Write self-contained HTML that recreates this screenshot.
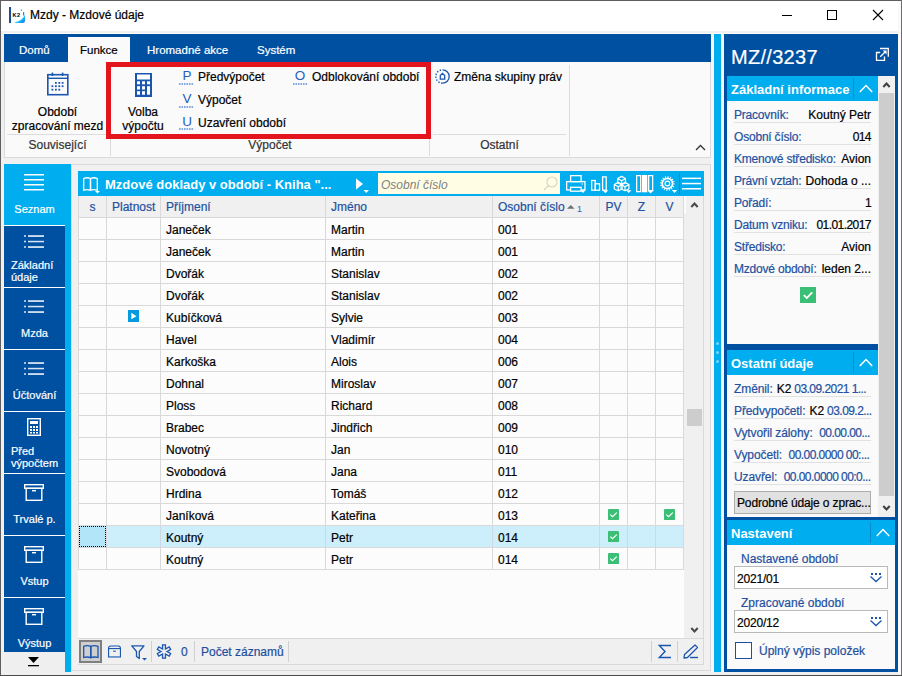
<!DOCTYPE html>
<html><head><meta charset="utf-8">
<style>
*{margin:0;padding:0;box-sizing:border-box}
html,body{width:902px;height:676px;overflow:hidden;background:#f0f0f0;font-family:"Liberation Sans",sans-serif;font-size:12px;color:#000}
.a{position:absolute}
.t{position:absolute;white-space:nowrap;line-height:14px;-webkit-text-stroke:0.2px}
.d{letter-spacing:-0.55px}
svg{position:absolute;overflow:visible}
</style></head><body>
<div class="a" style="left:0px;top:0px;width:902px;height:676px;background:#f0f0f0;"></div>
<div class="a" style="left:1px;top:1px;width:899px;height:30px;background:#fff;"></div>
<div class="a" style="left:0px;top:0px;width:902px;height:1px;background:#5e5e5e;"></div>
<div class="a" style="left:0px;top:0px;width:1px;height:676px;background:#5e5e5e;"></div>
<div class="a" style="left:898px;top:1px;width:3px;height:673px;background:#fafafa;"></div>
<div class="a" style="left:901px;top:0px;width:1px;height:676px;background:#6e6e6e;"></div>
<div class="a" style="left:4px;top:33px;width:896px;height:1px;background:#fff;"></div>
<div class="a" style="left:9px;top:7px;width:2px;height:16px;background:#1a4d9c;"></div>
<svg style="left:12px;top:8px" width="14" height="16"><defs><linearGradient id="k2g" x1="0" y1="0" x2="1" y2="1"><stop offset="0" stop-color="#3ff0d8"/><stop offset="0.6" stop-color="#19c8f5"/><stop offset="1" stop-color="#1a60f0"/></linearGradient></defs><path d="M2.5 14.3Q9.5 13.5 13 6.8V13Q13 15 10.5 15H4Z" fill="url(#k2g)"/><circle cx="9.5" cy="2.2" r="0.8" fill="#5a8ef0"/><rect x="11" y="4" width="1.2" height="3.5" fill="#3a7af0"/><text x="0.6" y="9" font-family="Liberation Sans" font-weight="bold" font-size="5.6" letter-spacing="0.4" fill="#000" style="-webkit-text-stroke:0.3px #000">K2</text></svg>
<div class="t" style="left:30px;top:8px;">Mzdy - Mzdové údaje</div>
<div class="a" style="left:782px;top:15px;width:10px;height:1px;background:#000;"></div>
<div class="a" style="left:827px;top:10px;width:10px;height:10px;background:transparent;border:1px solid #000"></div>
<svg style="left:873px;top:10px" width="10" height="10"><path d="M0 0L10 10M10 0L0 10" stroke="#000" stroke-width="1.1"/></svg>
<div class="a" style="left:4px;top:34px;width:707px;height:28px;background:#0050a2;"></div>
<div class="a" style="left:68px;top:37px;width:62px;height:25px;background:#fafafa;"></div>
<div class="t" style="left:19px;top:43px;color:#fff;font-size:11.5px">Domů</div>
<div class="t" style="left:80px;top:43px;font-size:11.5px">Funkce</div>
<div class="t" style="left:147px;top:43px;color:#fff;font-size:11.5px">Hromadné akce</div>
<div class="t" style="left:257px;top:43px;color:#fff;font-size:11.5px">Systém</div>
<div class="a" style="left:4px;top:62px;width:707px;height:96px;background:#fafafa;border:1px solid #dadada;border-top:none"></div>
<svg style="left:47px;top:72px" width="22" height="24"><g fill="none" stroke="#1a56b0" stroke-width="1.6"><rect x="0.8" y="2.7" width="20" height="20"/></g><rect x="0.7" y="5.6" width="20.2" height="1.4" fill="#1a56b0"/><rect x="4.6" y="0.6" width="1.6" height="3.4" fill="#1a56b0"/><rect x="14.8" y="0.6" width="1.6" height="3.4" fill="#1a56b0"/><g fill="#1a56b0"><rect x="8" y="10" width="1.8" height="1.8"/><rect x="11.4" y="10" width="1.8" height="1.8"/><rect x="14.7" y="10" width="1.8" height="1.8"/><rect x="4.5" y="13.3" width="1.8" height="1.8"/><rect x="8" y="13.3" width="1.8" height="1.8"/><rect x="11.4" y="13.3" width="1.8" height="1.8"/><rect x="14.7" y="13.3" width="1.8" height="1.8"/><rect x="4.5" y="16.8" width="1.8" height="1.8"/><rect x="8" y="16.8" width="1.8" height="1.8"/><rect x="11.4" y="16.8" width="1.8" height="1.8"/></g></svg>
<div class="t" style="left:4px;top:105px;width:107px;text-align:center">Období</div>
<div class="t" style="left:4px;top:119px;width:107px;text-align:center">zpracování mezd</div>
<div class="a" style="left:7px;top:134px;width:421px;height:1px;background:#dcdcdc;"></div>
<div class="a" style="left:433px;top:134px;width:133px;height:1px;background:#dcdcdc;"></div>
<div class="a" style="left:110px;top:139px;width:1px;height:17px;background:#dcdcdc;"></div>
<div class="a" style="left:429px;top:139px;width:1px;height:17px;background:#dcdcdc;"></div>
<div class="a" style="left:569px;top:65px;width:1px;height:91px;background:#dcdcdc;"></div>
<div class="t" style="left:4px;top:138px;width:107px;text-align:center;color:#333">Související</div>
<div class="t" style="left:111px;top:138px;width:318px;text-align:center;color:#333">Výpočet</div>
<div class="t" style="left:430px;top:138px;width:139px;text-align:center;color:#333">Ostatní</div>
<svg style="left:695px;top:144px" width="11" height="7"><path d="M1 6L5.5 1.5L10 6" fill="none" stroke="#333" stroke-width="1.3"/></svg>
<svg style="left:135px;top:73px" width="17" height="24"><rect width="17" height="24" fill="#1a56b0"/><g fill="#fff"><rect x="2" y="1.5" width="13" height="5"/><rect x="2" y="8.3" width="3" height="3"/><rect x="7" y="8.3" width="3" height="3"/><rect x="12" y="8.3" width="3" height="3"/><rect x="2" y="13.2" width="3" height="3.3"/><rect x="7" y="13.2" width="3" height="3.3"/><rect x="12" y="13.2" width="3" height="8.5"/><rect x="2" y="18.2" width="3" height="3.5"/><rect x="7" y="18.2" width="3" height="3.5"/></g></svg>
<div class="t" style="left:112px;top:105px;width:62px;text-align:center">Volba</div>
<div class="t" style="left:112px;top:119px;width:62px;text-align:center">výpočtu</div>
<div class="t" style="left:180px;top:69px;width:14px;text-align:center;font-size:13.5px;color:#1f5fc0;-webkit-text-stroke:0">P</div>
<svg style="left:179px;top:83px" width="15" height="2"><line x1="0" y1="1" x2="15" y2="1" stroke="#5d8fd6" stroke-width="1.6" stroke-dasharray="1.6 0.9"/></svg>
<div class="t" style="left:198px;top:70px;">Předvýpočet</div>
<div class="t" style="left:180px;top:92px;width:14px;text-align:center;font-size:13.5px;color:#1f5fc0;-webkit-text-stroke:0">V</div>
<svg style="left:179px;top:106px" width="15" height="2"><line x1="0" y1="1" x2="15" y2="1" stroke="#5d8fd6" stroke-width="1.6" stroke-dasharray="1.6 0.9"/></svg>
<div class="t" style="left:198px;top:93px;">Výpočet</div>
<div class="t" style="left:180px;top:115px;width:14px;text-align:center;font-size:13.5px;color:#1f5fc0;-webkit-text-stroke:0">U</div>
<svg style="left:179px;top:128px" width="15" height="2"><line x1="0" y1="1" x2="15" y2="1" stroke="#5d8fd6" stroke-width="1.6" stroke-dasharray="1.6 0.9"/></svg>
<div class="t" style="left:198px;top:116px;">Uzavření období</div>
<div class="t" style="left:293px;top:69px;width:14px;text-align:center;font-size:13.5px;color:#1f5fc0;-webkit-text-stroke:0">O</div>
<svg style="left:293px;top:83px" width="15" height="2"><line x1="0" y1="1" x2="15" y2="1" stroke="#5d8fd6" stroke-width="1.6" stroke-dasharray="1.6 0.9"/></svg>
<div class="t" style="left:312px;top:70px;">Odblokování období</div>
<svg style="left:435px;top:69px" width="15" height="15"><path d="M7.5 0.8A6.7 6.7 0 0 1 7.5 14.2" fill="none" stroke="#1a56b0" stroke-width="1.3"/><path d="M7.5 14.2A6.7 6.7 0 0 1 7.5 0.8" fill="none" stroke="#1a56b0" stroke-width="1.4" stroke-dasharray="1.4 1.6"/><path d="M5.3 10.2V6.6L7.5 4.4L9.7 6.6V10.2Z" fill="none" stroke="#1a56b0" stroke-width="1.3"/></svg>
<div class="t" style="left:454px;top:70px;">Změna skupiny práv</div>
<div class="a" style="left:106px;top:62px;width:325px;height:77px;background:transparent;border:5px solid #e3141e"></div>
<div class="a" style="left:4px;top:164px;width:67px;height:508px;background:#00adef;"></div>
<svg style="left:24px;top:173px" width="20" height="18"><g fill="#fff"><rect x="0" y="1" width="20" height="1.5"/><rect x="0" y="6" width="20" height="1.5"/><rect x="0" y="11" width="20" height="1.5"/><rect x="0" y="16" width="20" height="1.5"/></g></svg>
<div class="t" style="left:4px;top:202px;width:61px;text-align:center;font-size:11px;color:#fff">Seznam</div>
<div class="a" style="left:4px;top:225px;width:61px;height:1px;background:#fff;"></div>
<div class="a" style="left:4px;top:226px;width:61px;height:61px;background:#0050a2;"></div>
<div class="a" style="left:4px;top:287px;width:61px;height:1px;background:#fff;"></div>
<div class="a" style="left:4px;top:288px;width:61px;height:61px;background:#0050a2;"></div>
<div class="a" style="left:4px;top:349px;width:61px;height:1px;background:#fff;"></div>
<div class="a" style="left:4px;top:350px;width:61px;height:61px;background:#0050a2;"></div>
<div class="a" style="left:4px;top:411px;width:61px;height:1px;background:#fff;"></div>
<div class="a" style="left:4px;top:412px;width:61px;height:61px;background:#0050a2;"></div>
<div class="a" style="left:4px;top:473px;width:61px;height:1px;background:#fff;"></div>
<div class="a" style="left:4px;top:474px;width:61px;height:61px;background:#0050a2;"></div>
<div class="a" style="left:4px;top:535px;width:61px;height:1px;background:#fff;"></div>
<div class="a" style="left:4px;top:536px;width:61px;height:61px;background:#0050a2;"></div>
<div class="a" style="left:4px;top:597px;width:61px;height:1px;background:#fff;"></div>
<div class="a" style="left:4px;top:598px;width:61px;height:54px;background:#0050a2;"></div>
<svg style="left:23px;top:235px" width="22" height="14"><g fill="#fff"><rect x="1.2" y="0.2" width="1.6" height="1.6"/><rect x="1.2" y="5.7" width="1.6" height="1.6"/><rect x="1.2" y="11.2" width="1.6" height="1.6"/><rect x="5" y="0.3" width="16" height="1.5"/><rect x="5" y="5.8" width="16" height="1.5" opacity=".85"/><rect x="5" y="11.3" width="16" height="1.5"/></g></svg>
<div class="t" style="left:11px;top:259px;font-size:11px;color:#fff;line-height:12px">Základní<br>údaje</div>
<svg style="left:23px;top:300px" width="22" height="14"><g fill="#fff"><rect x="1.2" y="0.2" width="1.6" height="1.6"/><rect x="1.2" y="5.7" width="1.6" height="1.6"/><rect x="1.2" y="11.2" width="1.6" height="1.6"/><rect x="5" y="0.3" width="16" height="1.5"/><rect x="5" y="5.8" width="16" height="1.5" opacity=".85"/><rect x="5" y="11.3" width="16" height="1.5"/></g></svg>
<div class="t" style="left:4px;top:326px;width:61px;text-align:center;font-size:11px;color:#fff">Mzda</div>
<svg style="left:23px;top:362px" width="22" height="14"><g fill="#fff"><rect x="1.2" y="0.2" width="1.6" height="1.6"/><rect x="1.2" y="5.7" width="1.6" height="1.6"/><rect x="1.2" y="11.2" width="1.6" height="1.6"/><rect x="5" y="0.3" width="16" height="1.5"/><rect x="5" y="5.8" width="16" height="1.5" opacity=".85"/><rect x="5" y="11.3" width="16" height="1.5"/></g></svg>
<div class="t" style="left:4px;top:388px;width:61px;text-align:center;font-size:11px;color:#fff">Účtování</div>
<svg style="left:27px;top:418px" width="14" height="18"><rect x="0.7" y="0.7" width="12.6" height="16.6" fill="none" stroke="#fff" stroke-width="1.4"/><rect x="3" y="3" width="8" height="3" fill="#fff"/><g fill="#fff"><rect x="3" y="8" width="2" height="2"/><rect x="6" y="8" width="2" height="2"/><rect x="9" y="8" width="2" height="2"/><rect x="3" y="11" width="2" height="2"/><rect x="6" y="11" width="2" height="2"/><rect x="9" y="11" width="2" height="2"/><rect x="3" y="14" width="2" height="1.5"/><rect x="6" y="14" width="2" height="1.5"/><rect x="9" y="14" width="2" height="1.5"/></g></svg>
<div class="t" style="left:11px;top:445px;font-size:11px;color:#fff;line-height:12px">Před<br>výpočtem</div>
<svg style="left:24px;top:484px" width="20" height="17"><g fill="none" stroke="#fff" stroke-width="1.4"><rect x="0.7" y="0.7" width="18.6" height="3.6"/><rect x="2.2" y="4.3" width="15.6" height="12"/></g><rect x="8" y="6" width="4" height="1.4" fill="#fff"/></svg>
<div class="t" style="left:4px;top:512px;width:61px;text-align:center;font-size:11px;color:#fff">Trvalé p.</div>
<svg style="left:24px;top:546px" width="20" height="17"><g fill="none" stroke="#fff" stroke-width="1.4"><rect x="0.7" y="0.7" width="18.6" height="3.6"/><rect x="2.2" y="4.3" width="15.6" height="12"/></g><rect x="8" y="6" width="4" height="1.4" fill="#fff"/></svg>
<div class="t" style="left:4px;top:574px;width:61px;text-align:center;font-size:11px;color:#fff">Vstup</div>
<svg style="left:24px;top:608px" width="20" height="17"><g fill="none" stroke="#fff" stroke-width="1.4"><rect x="0.7" y="0.7" width="18.6" height="3.6"/><rect x="2.2" y="4.3" width="15.6" height="12"/></g><rect x="8" y="6" width="4" height="1.4" fill="#fff"/></svg>
<div class="t" style="left:4px;top:636px;width:61px;text-align:center;font-size:11px;color:#fff">Výstup</div>
<div class="a" style="left:4px;top:652px;width:61px;height:20px;background:#efefef;"></div>
<svg style="left:28px;top:657px" width="12" height="10"><path d="M0 0H11L5.5 6Z" fill="#000"/><rect x="0" y="8" width="11" height="1.3" fill="#000"/></svg>
<div class="a" style="left:71px;top:164px;width:640px;height:507px;background:#f0f0f0;border:1px solid #d9d9d9"></div>
<div class="a" style="left:78px;top:171px;width:626px;height:25px;background:#00adef;"></div>
<svg style="left:83px;top:177px" width="18" height="17" viewBox="0 0 18 17"><g fill="none" stroke="#fff" stroke-width="1.3"><path d="M0.7 1.5Q4 0 7.5 1.5V13.2Q4 12 0.7 13.2Z"/><path d="M7.5 1.5Q11 0 14.3 1.5V13.2Q11 12 7.5 13.2Z"/></g><path d="M12 14H17L14.5 16.5Z" fill="#fff"/></svg>
<div class="t" style="left:105px;top:178px;font-size:13px;font-weight:bold;color:#fff;-webkit-text-stroke:0">Mzdové doklady v období - Kniha "...</div>
<svg style="left:355px;top:178px" width="15" height="16"><path d="M1 0.5L8 6L1 11.5Z" fill="#fff"/><path d="M8.5 12H14L11.25 15Z" fill="#fff"/></svg>
<div class="a" style="left:378px;top:173px;width:182px;height:21px;background:#fffde3;"></div>
<div class="t" style="left:381px;top:178px;font-style:italic;color:#808080;-webkit-text-stroke:0">Osobní číslo</div>
<svg style="left:543px;top:176px" width="15" height="15"><circle cx="9" cy="6" r="5" fill="none" stroke="#d6d6c4" stroke-width="1.2"/><path d="M5.5 9.5L1 14" stroke="#d6d6c4" stroke-width="1.3"/></svg>
<svg style="left:566px;top:175px" width="21" height="19" viewBox="0 0 21 19"><g fill="none" stroke="#fff" stroke-width="1.3"><rect x="4.6" y="0.65" width="10.5" height="6"/><rect x="0.65" y="6.6" width="18.3" height="8.3"/></g><rect x="4.6" y="12.3" width="10.5" height="3.9" fill="#00adef" stroke="#fff" stroke-width="1.3"/><rect x="15.5" y="8.5" width="1.5" height="1" fill="#fff"/><path d="M14.5 15.2H19.5L17 18Z" fill="#fff"/></svg>
<svg style="left:591px;top:176px" width="18" height="18" viewBox="0 0 18 18"><g fill="none" stroke="#fff" stroke-width="1.3"><rect x="0.65" y="4.5" width="3.6" height="9.7"/><rect x="4.25" y="7.8" width="4.3" height="6.4"/><rect x="11.6" y="0.9" width="3.6" height="13.3"/></g><path d="M11.5 14.3H17.3L14.4 17.3Z" fill="#fff"/></svg>
<svg style="left:614px;top:176px" width="18" height="18" viewBox="0 0 18 18"><g fill="none" stroke="#fff" stroke-width="1.2" stroke-linejoin="round"><path d="M7.60 0.40L11.50 2.50L11.50 7.00L7.60 8.80L3.70 7.00L3.70 2.50Z M3.70 2.50L7.60 4.70L11.50 2.50 M7.60 4.70L7.60 8.80"/><path d="M4.20 6.40L8.10 8.50L8.10 13.00L4.20 14.80L0.30 13.00L0.30 8.50Z M0.30 8.50L4.20 10.70L8.10 8.50 M4.20 10.70L4.20 14.80"/><path d="M11.00 6.40L14.90 8.50L14.90 13.00L11.00 14.80L7.10 13.00L7.10 8.50Z M7.10 8.50L11.00 10.70L14.90 8.50 M11.00 10.70L11.00 14.80"/></g><path d="M12 14.3H17.5L14.75 17Z" fill="#fff"/></svg>
<svg style="left:636px;top:175px" width="18" height="19" viewBox="0 0 18 19"><g fill="none" stroke="#fff" stroke-width="1.3"><rect x="0.65" y="0.65" width="4" height="16"/><rect x="12.65" y="0.65" width="4" height="15"/></g><rect x="6" y="0" width="5.3" height="17.3" fill="#fff"/><path d="M11.5 15.5H17.5L14.5 18.5Z" fill="#fff"/></svg>
<svg style="left:659px;top:175px" width="20" height="19" viewBox="0 0 20 19"><circle cx="8.4" cy="8.5" r="5.2" fill="none" stroke="#fff" stroke-width="1.7"/><circle cx="8.4" cy="8.5" r="6.6" fill="none" stroke="#fff" stroke-width="1.6" stroke-dasharray="1.0 1.59"/><circle cx="8.4" cy="8.5" r="2.3" fill="none" stroke="#fff" stroke-width="1.2"/><path d="M12.8 15H18.2L15.5 18Z" fill="#fff"/></svg>
<div class="a" style="left:679px;top:173px;width:1px;height:21px;background:#0a8dcb;"></div>
<svg style="left:682px;top:177px" width="20" height="13"><g fill="#fff"><rect x="0" y="0.6" width="19" height="1.5"/><rect x="0" y="5.8" width="19" height="1.5"/><rect x="0" y="11" width="19" height="1.5"/></g></svg>
<div class="a" style="left:78px;top:196px;width:626px;height:442px;background:#fcfcfc;"></div>
<div class="a" style="left:78px;top:196px;width:606px;height:21px;background:#f0f0f0;"></div>
<div class="a" style="left:684px;top:214px;width:19px;height:424px;background:#f0f0f0;"></div>
<div class="a" style="left:686px;top:196px;width:17px;height:18px;background:#f0f0f0;"></div>
<div class="a" style="left:703px;top:196px;width:1px;height:469px;background:#d9d9d9;"></div>
<div class="a" style="left:78px;top:196px;width:1px;height:374px;background:#d9d9d9;"></div>
<div class="a" style="left:106px;top:196px;width:1px;height:374px;background:#d9d9d9;"></div>
<div class="a" style="left:160px;top:196px;width:1px;height:374px;background:#d9d9d9;"></div>
<div class="a" style="left:325px;top:196px;width:1px;height:374px;background:#d9d9d9;"></div>
<div class="a" style="left:492px;top:196px;width:1px;height:374px;background:#d9d9d9;"></div>
<div class="a" style="left:599px;top:196px;width:1px;height:374px;background:#d9d9d9;"></div>
<div class="a" style="left:627px;top:196px;width:1px;height:374px;background:#d9d9d9;"></div>
<div class="a" style="left:655px;top:196px;width:1px;height:374px;background:#d9d9d9;"></div>
<div class="a" style="left:683px;top:196px;width:1px;height:374px;background:#d9d9d9;"></div>
<div class="a" style="left:78px;top:217px;width:606px;height:1px;background:#d9d9d9;"></div>
<div class="a" style="left:78px;top:239px;width:606px;height:1px;background:#d9d9d9;"></div>
<div class="a" style="left:78px;top:261px;width:606px;height:1px;background:#d9d9d9;"></div>
<div class="a" style="left:78px;top:283px;width:606px;height:1px;background:#d9d9d9;"></div>
<div class="a" style="left:78px;top:305px;width:606px;height:1px;background:#d9d9d9;"></div>
<div class="a" style="left:78px;top:327px;width:606px;height:1px;background:#d9d9d9;"></div>
<div class="a" style="left:78px;top:349px;width:606px;height:1px;background:#d9d9d9;"></div>
<div class="a" style="left:78px;top:371px;width:606px;height:1px;background:#d9d9d9;"></div>
<div class="a" style="left:78px;top:393px;width:606px;height:1px;background:#d9d9d9;"></div>
<div class="a" style="left:78px;top:415px;width:606px;height:1px;background:#d9d9d9;"></div>
<div class="a" style="left:78px;top:437px;width:606px;height:1px;background:#d9d9d9;"></div>
<div class="a" style="left:78px;top:459px;width:606px;height:1px;background:#d9d9d9;"></div>
<div class="a" style="left:78px;top:481px;width:606px;height:1px;background:#d9d9d9;"></div>
<div class="a" style="left:78px;top:503px;width:606px;height:1px;background:#d9d9d9;"></div>
<div class="a" style="left:78px;top:525px;width:606px;height:1px;background:#d9d9d9;"></div>
<div class="a" style="left:78px;top:547px;width:606px;height:1px;background:#d9d9d9;"></div>
<div class="a" style="left:78px;top:569px;width:606px;height:1px;background:#d9d9d9;"></div>
<div class="t" style="left:79px;top:200px;width:27px;text-align:center;color:#22509f">s</div>
<div class="t" style="left:112px;top:200px;color:#22509f">Platnost</div>
<div class="t" style="left:166px;top:200px;color:#22509f">Příjmení</div>
<div class="t" style="left:331px;top:200px;color:#22509f">Jméno</div>
<div class="t" style="left:498px;top:200px;color:#22509f">Osobní číslo</div>
<svg style="left:567px;top:204px" width="8" height="6"><path d="M0 4.8H7.6L3.8 1Z" fill="#707070"/></svg>
<div class="t" style="left:577px;top:202px;font-size:9px;color:#3060c0;-webkit-text-stroke:0">1</div>
<div class="t" style="left:600px;top:200px;width:27px;text-align:center;color:#22509f">PV</div>
<div class="t" style="left:628px;top:200px;width:27px;text-align:center;color:#22509f">Z</div>
<div class="t" style="left:656px;top:200px;width:27px;text-align:center;color:#22509f">V</div>
<div class="a" style="left:107px;top:526px;width:576px;height:21px;background:#cdeefb;"></div>
<div class="a" style="left:79px;top:526px;width:27px;height:21px;background:#b3e5f9;border:1px dotted #000"></div>
<div class="a" style="left:160px;top:526px;width:1px;height:21px;background:#cdd9de;"></div>
<div class="a" style="left:325px;top:526px;width:1px;height:21px;background:#cdd9de;"></div>
<div class="a" style="left:492px;top:526px;width:1px;height:21px;background:#cdd9de;"></div>
<div class="a" style="left:599px;top:526px;width:1px;height:21px;background:#cdd9de;"></div>
<div class="a" style="left:627px;top:526px;width:1px;height:21px;background:#cdd9de;"></div>
<div class="a" style="left:655px;top:526px;width:1px;height:21px;background:#cdd9de;"></div>
<div class="t" style="left:166px;top:223px;">Janeček</div>
<div class="t" style="left:331px;top:223px;">Martin</div>
<div class="t" style="left:498px;top:223px;">001</div>
<div class="t" style="left:166px;top:245px;">Janeček</div>
<div class="t" style="left:331px;top:245px;">Martin</div>
<div class="t" style="left:498px;top:245px;">001</div>
<div class="t" style="left:166px;top:267px;">Dvořák</div>
<div class="t" style="left:331px;top:267px;">Stanislav</div>
<div class="t" style="left:498px;top:267px;">002</div>
<div class="t" style="left:166px;top:289px;">Dvořák</div>
<div class="t" style="left:331px;top:289px;">Stanislav</div>
<div class="t" style="left:498px;top:289px;">002</div>
<div class="t" style="left:166px;top:311px;">Kubíčková</div>
<div class="t" style="left:331px;top:311px;">Sylvie</div>
<div class="t" style="left:498px;top:311px;">003</div>
<svg style="left:128px;top:310px" width="11" height="12"><rect width="11" height="12" fill="#069be0"/><path d="M3.3 2.8L8.5 6.2L3.3 9.3Z" fill="#fff"/></svg>
<div class="t" style="left:166px;top:333px;">Havel</div>
<div class="t" style="left:331px;top:333px;">Vladimír</div>
<div class="t" style="left:498px;top:333px;">004</div>
<div class="t" style="left:166px;top:355px;">Karkoška</div>
<div class="t" style="left:331px;top:355px;">Alois</div>
<div class="t" style="left:498px;top:355px;">006</div>
<div class="t" style="left:166px;top:377px;">Dohnal</div>
<div class="t" style="left:331px;top:377px;">Miroslav</div>
<div class="t" style="left:498px;top:377px;">007</div>
<div class="t" style="left:166px;top:399px;">Ploss</div>
<div class="t" style="left:331px;top:399px;">Richard</div>
<div class="t" style="left:498px;top:399px;">008</div>
<div class="t" style="left:166px;top:421px;">Brabec</div>
<div class="t" style="left:331px;top:421px;">Jindřich</div>
<div class="t" style="left:498px;top:421px;">009</div>
<div class="t" style="left:166px;top:443px;">Novotný</div>
<div class="t" style="left:331px;top:443px;">Jan</div>
<div class="t" style="left:498px;top:443px;">010</div>
<div class="t" style="left:166px;top:465px;">Svobodová</div>
<div class="t" style="left:331px;top:465px;">Jana</div>
<div class="t" style="left:498px;top:465px;">011</div>
<div class="t" style="left:166px;top:487px;">Hrdina</div>
<div class="t" style="left:331px;top:487px;">Tomáš</div>
<div class="t" style="left:498px;top:487px;">012</div>
<div class="t" style="left:166px;top:509px;">Janíková</div>
<div class="t" style="left:331px;top:509px;">Kateřina</div>
<div class="t" style="left:498px;top:509px;">013</div>
<svg style="left:608px;top:509px" width="11" height="11" viewBox="0 0 11.5 11.5"><rect width="11.5" height="11.5" rx="0.5" fill="#3bbf76"/><path d="M2.4 5.9L4.7 8.1L9.2 3.8" fill="none" stroke="#fff" stroke-width="1.3"/></svg>
<svg style="left:664px;top:509px" width="11" height="11" viewBox="0 0 11.5 11.5"><rect width="11.5" height="11.5" rx="0.5" fill="#3bbf76"/><path d="M2.4 5.9L4.7 8.1L9.2 3.8" fill="none" stroke="#fff" stroke-width="1.3"/></svg>
<div class="t" style="left:166px;top:531px;">Koutný</div>
<div class="t" style="left:331px;top:531px;">Petr</div>
<div class="t" style="left:498px;top:531px;">014</div>
<svg style="left:608px;top:531px" width="11" height="11" viewBox="0 0 11.5 11.5"><rect width="11.5" height="11.5" rx="0.5" fill="#3bbf76"/><path d="M2.4 5.9L4.7 8.1L9.2 3.8" fill="none" stroke="#fff" stroke-width="1.3"/></svg>
<div class="t" style="left:166px;top:553px;">Koutný</div>
<div class="t" style="left:331px;top:553px;">Petr</div>
<div class="t" style="left:498px;top:553px;">014</div>
<svg style="left:608px;top:553px" width="11" height="11" viewBox="0 0 11.5 11.5"><rect width="11.5" height="11.5" rx="0.5" fill="#3bbf76"/><path d="M2.4 5.9L4.7 8.1L9.2 3.8" fill="none" stroke="#fff" stroke-width="1.3"/></svg>
<svg style="left:690px;top:201px" width="9" height="7"><path d="M1.3 6L4.5 2.5L7.7 6" fill="none" stroke="#4a4a4a" stroke-width="2.1"/></svg>
<div class="a" style="left:687px;top:409px;width:15px;height:17px;background:#cdcdcd;"></div>
<svg style="left:690px;top:627px" width="9" height="7"><path d="M1.3 1L4.5 4.5L7.7 1" fill="none" stroke="#4a4a4a" stroke-width="2.1"/></svg>
<div class="a" style="left:78px;top:638px;width:626px;height:1px;background:#d9d9d9;"></div>
<div class="a" style="left:78px;top:664px;width:626px;height:1px;background:#d9d9d9;"></div>
<div class="a" style="left:79px;top:640px;width:23px;height:23px;background:#cfcfcf;border:2px solid #7f7f7f"></div>
<svg style="left:83px;top:645px" width="16" height="14" viewBox="0 0 16 14"><g fill="none" stroke="#1a56b0" stroke-width="1.3"><path d="M0.7 1.3Q4 0 7.8 1.3V12.5Q4 11.5 0.7 12.5Z"/><path d="M7.8 1.3Q11.5 0 15 1.3V12.5Q11.5 11.5 7.8 12.5Z"/></g></svg>
<svg style="left:108px;top:645px" width="13" height="13" viewBox="0 0 15 14"><g fill="none" stroke="#1a56b0" stroke-width="1.3"><path d="M0.65 3.5Q0.65 0.65 3 0.65H12Q14.35 0.65 14.35 3.5"/><rect x="0.65" y="3.6" width="13.7" height="9.7"/></g><rect x="6" y="6" width="3" height="1.3" fill="#1a56b0"/></svg>
<svg style="left:131px;top:645px" width="17" height="16" viewBox="0 0 17 16"><path d="M0.8 0.8H13L8.3 6.5V13.5L5.5 11.5V6.5Z" fill="none" stroke="#1a56b0" stroke-width="1.3" stroke-linejoin="round"/><path d="M11 13H16L13.5 15.5Z" fill="#1a56b0"/></svg>
<div class="a" style="left:151px;top:641px;width:1px;height:21px;background:#d0d0d0;"></div>
<svg style="left:156px;top:644px" width="16" height="15" viewBox="0 0 16 15"><g stroke="#1a56b0" stroke-width="4.2"><path d="M8 0.3V14.7M1.5 3.9L14.5 11.1M1.5 11.1L14.5 3.9"/></g><g stroke="#f0f0f0" stroke-width="1.6"><path d="M8 1.5V13.5M2.6 4.5L13.4 10.5M2.6 10.5L13.4 4.5"/></g></svg>
<div class="t" style="left:181px;top:645px;color:#1d4f9e">0</div>
<div class="a" style="left:194px;top:641px;width:1px;height:21px;background:#d0d0d0;"></div>
<div class="t" style="left:201px;top:645px;color:#1d4f9e">Počet záznamů</div>
<div class="a" style="left:288px;top:641px;width:1px;height:21px;background:#d0d0d0;"></div>
<div class="a" style="left:651px;top:641px;width:1px;height:21px;background:#d0d0d0;"></div>
<div class="a" style="left:677px;top:641px;width:1px;height:21px;background:#d0d0d0;"></div>
<svg style="left:658px;top:644px" width="14" height="15"><path d="M13 1.5H1.3L7 7.5L1.3 13.5H13" fill="none" stroke="#1a56b0" stroke-width="1.4"/></svg>
<svg style="left:683px;top:644px" width="16" height="15" viewBox="0 0 16 15"><path d="M12 1L14.5 3.5L4.5 13.5L1 14L1.5 10.5Z" fill="none" stroke="#1a56b0" stroke-width="1.3" stroke-linejoin="round"/><rect x="7" y="12.8" width="8" height="1.4" fill="#1a56b0"/></svg>
<div class="a" style="left:711px;top:34px;width:3px;height:638px;background:#f6f6f6;"></div>
<div class="a" style="left:714px;top:34px;width:7px;height:638px;background:#00adef;"></div>
<div class="a" style="left:721px;top:34px;width:3px;height:638px;background:#f6f3f1;"></div>
<div class="a" style="left:716px;top:342px;width:3px;height:3px;background:#7fd3f6;border-radius:2px"></div>
<div class="a" style="left:716px;top:351px;width:3px;height:3px;background:#7fd3f6;border-radius:2px"></div>
<div class="a" style="left:716px;top:360px;width:3px;height:3px;background:#7fd3f6;border-radius:2px"></div>
<div class="a" style="left:724px;top:34px;width:174px;height:638px;background:#0050a2;"></div>
<div class="t" style="left:731px;top:45px;font-size:20px;line-height:24px;letter-spacing:0.3px;color:#fff">MZ//3237</div>
<svg style="left:875px;top:47px" width="15" height="15" viewBox="0 0 15 15"><g fill="none" stroke="#fff" stroke-width="1.3"><path d="M5 1.5H13.3V9.8"/><path d="M5.2 5.5H1.5V13.3H9.5V9.6"/><path d="M5.3 9.7L10 5"/></g><path d="M7.6 3.6H11.6V7.6Z" fill="#fff"/></svg>
<div class="a" style="left:727px;top:76px;width:151px;height:25px;background:#00adef;"></div>
<div class="t" style="left:731px;top:83px;font-size:13px;font-weight:bold;color:#fff;-webkit-text-stroke:0">Základní informace</div>
<div class="a" style="left:853px;top:78px;width:1px;height:21px;background:#0a8dcb;"></div>
<svg style="left:859px;top:84px" width="14" height="9"><path d="M0.8 8L7 1.6L13.2 8" fill="none" stroke="#fff" stroke-width="1.5"/></svg>
<div class="a" style="left:727px;top:101px;width:151px;height:243px;background:#fafafa;"></div>
<div class="a" style="left:878px;top:76px;width:17px;height:441px;background:#f0f0f0;"></div>
<div class="a" style="left:879px;top:93px;width:15px;height:403px;background:#cdcdcd;"></div>
<svg style="left:882px;top:81px" width="9" height="7"><path d="M1.3 6L4.5 2.5L7.7 6" fill="none" stroke="#404040" stroke-width="2.1"/></svg>
<svg style="left:882px;top:505px" width="9" height="7"><path d="M1.3 1L4.5 4.5L7.7 1" fill="none" stroke="#404040" stroke-width="2.1"/></svg>
<div class="t" style="left:734px;top:108px;color:#22509f;letter-spacing:-0.2px">Pracovník:</div>
<div class="t" style="right:31px;top:108px;text-align:right">Koutný Petr</div>
<div class="a" style="left:734px;top:122px;width:137px;height:1px;background:#e2e2e2;"></div>
<div class="t" style="left:734px;top:130px;color:#22509f;letter-spacing:-0.2px">Osobní číslo:</div>
<div class="t d" style="right:31px;top:130px;text-align:right">014</div>
<div class="a" style="left:734px;top:144px;width:137px;height:1px;background:#e2e2e2;"></div>
<div class="t" style="left:734px;top:152px;color:#22509f;letter-spacing:-0.2px">Kmenové středisko:</div>
<div class="t" style="right:31px;top:152px;text-align:right">Avion</div>
<div class="a" style="left:734px;top:166px;width:137px;height:1px;background:#e2e2e2;"></div>
<div class="t" style="left:734px;top:174px;color:#22509f;letter-spacing:-0.2px">Právní vztah:</div>
<div class="t" style="right:31px;top:174px;text-align:right">Dohoda o ...</div>
<div class="a" style="left:734px;top:188px;width:137px;height:1px;background:#e2e2e2;"></div>
<div class="t" style="left:734px;top:196px;color:#22509f;letter-spacing:-0.2px">Pořadí:</div>
<div class="t d" style="right:31px;top:196px;text-align:right">1</div>
<div class="a" style="left:734px;top:210px;width:137px;height:1px;background:#e2e2e2;"></div>
<div class="t" style="left:734px;top:218px;color:#22509f;letter-spacing:-0.2px">Datum vzniku:</div>
<div class="t d" style="right:31px;top:218px;text-align:right">01.01.2017</div>
<div class="a" style="left:734px;top:232px;width:137px;height:1px;background:#e2e2e2;"></div>
<div class="t" style="left:734px;top:240px;color:#22509f;letter-spacing:-0.2px">Středisko:</div>
<div class="t" style="right:31px;top:240px;text-align:right">Avion</div>
<div class="a" style="left:734px;top:254px;width:137px;height:1px;background:#e2e2e2;"></div>
<div class="t" style="left:734px;top:262px;color:#22509f;letter-spacing:-0.2px">Mzdové období:</div>
<div class="t" style="right:31px;top:262px;text-align:right">leden 2...</div>
<div class="a" style="left:734px;top:276px;width:137px;height:1px;background:#e2e2e2;"></div>
<svg style="left:800px;top:287px" width="16" height="16"><rect width="16" height="16" fill="#3bbf76"/><path d="M3.8 8.2L6.8 11L12.2 5.4" fill="none" stroke="#fff" stroke-width="1.8"/></svg>
<div class="a" style="left:727px;top:350px;width:151px;height:25px;background:#00adef;"></div>
<div class="t" style="left:731px;top:357px;font-size:13px;font-weight:bold;color:#fff;-webkit-text-stroke:0">Ostatní údaje</div>
<div class="a" style="left:853px;top:352px;width:1px;height:21px;background:#0a8dcb;"></div>
<svg style="left:859px;top:358px" width="14" height="9"><path d="M0.8 8L7 1.6L13.2 8" fill="none" stroke="#fff" stroke-width="1.5"/></svg>
<div class="a" style="left:727px;top:375px;width:151px;height:142px;background:#fafafa;"></div>
<div class="t" style="left:734px;top:382px;color:#22509f"><span style="letter-spacing:-0.1px">Změnil:</span><span style="color:#000;margin-left:4px">K2</span><span class="d" style="margin-left:3px">03.09.2021 1...</span></div>
<div class="a" style="left:734px;top:396px;width:137px;height:1px;background:#e2e2e2;"></div>
<div class="t" style="left:734px;top:404px;color:#22509f"><span style="letter-spacing:-0.1px">Předvypočetl:</span><span style="color:#000;margin-left:4px">K2</span><span class="d" style="margin-left:3px">03.09.2...</span></div>
<div class="a" style="left:734px;top:418px;width:137px;height:1px;background:#e2e2e2;"></div>
<div class="t" style="left:734px;top:426px;color:#22509f"><span style="letter-spacing:-0.1px">Vytvořil zálohy:</span><span class="d" style="margin-left:6.5px">00.00.00...</span></div>
<div class="a" style="left:734px;top:440px;width:137px;height:1px;background:#e2e2e2;"></div>
<div class="t" style="left:734px;top:448px;color:#22509f"><span style="letter-spacing:-0.1px">Vypočetl:</span><span class="d" style="margin-left:6.5px">00.00.0000 00:...</span></div>
<div class="a" style="left:734px;top:462px;width:137px;height:1px;background:#e2e2e2;"></div>
<div class="t" style="left:734px;top:470px;color:#22509f"><span style="letter-spacing:-0.1px">Uzavřel:</span><span class="d" style="margin-left:6.5px">00.00.0000 00:0...</span></div>
<div class="a" style="left:734px;top:484px;width:137px;height:1px;background:#e2e2e2;"></div>
<div class="a" style="left:734px;top:491px;width:137px;height:23px;background:#e1e1e1;border:1px solid #adadad"></div>
<div class="t" style="left:737px;top:496px;letter-spacing:-0.15px">Podrobné údaje o zprac...</div>
<div class="a" style="left:727px;top:520px;width:168px;height:25px;background:#00adef;"></div>
<div class="t" style="left:731px;top:527px;font-size:13px;font-weight:bold;color:#fff;-webkit-text-stroke:0">Nastavení</div>
<div class="a" style="left:870px;top:522px;width:1px;height:21px;background:#0a8dcb;"></div>
<svg style="left:876px;top:528px" width="14" height="9"><path d="M0.8 8L7 1.6L13.2 8" fill="none" stroke="#fff" stroke-width="1.5"/></svg>
<div class="a" style="left:727px;top:545px;width:168px;height:124px;background:#fafafa;"></div>
<div class="t" style="left:741px;top:552px;color:#22509f">Nastavené období</div>
<div class="a" style="left:734px;top:566px;width:154px;height:23px;background:#fff;border:1px solid #b9b9b9"></div>
<div class="t" style="left:737px;top:572px;letter-spacing:-0.2px">2021/01</div>
<div class="t" style="left:741px;top:596px;color:#22509f">Zpracované období</div>
<div class="a" style="left:734px;top:610px;width:154px;height:23px;background:#fff;border:1px solid #b9b9b9"></div>
<div class="t" style="left:737px;top:616px;letter-spacing:-0.2px">2020/12</div>
<svg style="left:870px;top:573px" width="12" height="10" viewBox="0 0 12 10"><g fill="#1a56b0"><rect x="1" y="0" width="2" height="2"/><rect x="5" y="0" width="2" height="2"/><rect x="9" y="0" width="2" height="2"/></g><path d="M0.5 3.5L6 8.5L11.5 3.5" fill="none" stroke="#1a56b0" stroke-width="1.3"/></svg>
<svg style="left:870px;top:617px" width="12" height="10" viewBox="0 0 12 10"><g fill="#1a56b0"><rect x="1" y="0" width="2" height="2"/><rect x="5" y="0" width="2" height="2"/><rect x="9" y="0" width="2" height="2"/></g><path d="M0.5 3.5L6 8.5L11.5 3.5" fill="none" stroke="#1a56b0" stroke-width="1.3"/></svg>
<div class="a" style="left:735px;top:642px;width:17px;height:17px;background:#fff;border:1px solid #22509f"></div>
<div class="t" style="left:759px;top:644px;color:#22509f">Úplný výpis položek</div>
<div class="a" style="left:0px;top:675px;width:902px;height:1px;background:#4a4a4a;"></div>
</body></html>
